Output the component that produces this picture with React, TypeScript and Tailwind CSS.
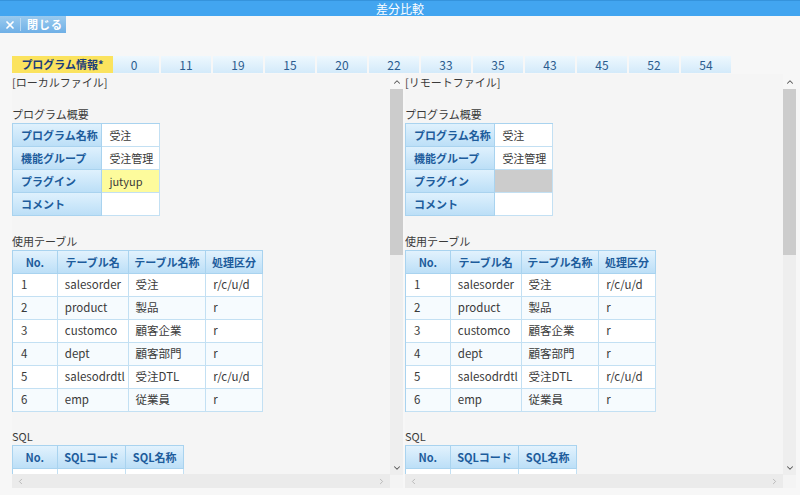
import React from 'react';
import { X, ChevronUp, ChevronDown, ChevronLeft, ChevronRight } from 'lucide-react';

const tabs = ['0', '11', '19', '15', '20', '22', '33', '35', '43', '45', '52', '54'];

const tableRows = [
  ['1', 'salesorder', '受注', 'r/c/u/d'],
  ['2', 'product', '製品', 'r'],
  ['3', 'customco', '顧客企業', 'r'],
  ['4', 'dept', '顧客部門', 'r'],
  ['5', 'salesodrdtl', '受注DTL', 'r/c/u/d'],
  ['6', 'emp', '従業員', 'r'],
];

const headCell =
  'h-[23px] flex items-center justify-center border-r border-b border-[#a9d3ef] bg-linear-to-b from-[#e2f2fd] to-[#bcdff7] font-bold text-[#1d5c9c]';
const dataCell = 'h-[23px] flex items-center pl-[7px] border-r border-b border-[#c3e0f3]';

function VScroll() {
  return (
    <div className="w-[13px] flex flex-col bg-[#eeeeee]">
      <div className="h-[15px] flex items-center justify-center bg-[#f7f7f7]">
        <ChevronUp size={10} strokeWidth={2.5} className="text-[#555]" />
      </div>
      <div className="h-[166px] bg-[#cccccc]" />
      <div className="flex-1" />
      <div className="h-[15px] flex items-center justify-center">
        <ChevronDown size={10} strokeWidth={2.5} className="text-[#555]" />
      </div>
      <div className="h-[13px] bg-[#f4f4f4]" />
    </div>
  );
}

function HScroll() {
  return (
    <div className="h-[14px] flex items-center justify-between bg-[#ebebeb] px-[4px]">
      <ChevronLeft size={9} strokeWidth={2} className="text-[#aaa]" />
      <ChevronRight size={9} strokeWidth={2} className="text-[#aaa]" />
    </div>
  );
}

function Panel({ title, remote }: { title: string; remote?: boolean }) {
  return (
    <div className="flex h-[414px]">
      <div className="w-[378px] flex flex-col">
        <div className="flex-1 overflow-hidden bg-[#f5f5f5] text-[11px] text-[#3a3a3a]">
          <div className="h-[17px] leading-[17px]">{title}</div>

          {/* プログラム概要 */}
          <div className="mt-[15px] h-[17px] leading-[17px]">プログラム概要</div>
          <div className="w-[148px] border-t border-l border-[#a9d3ef]">
            {[
              ['プログラム名称', '受注'],
              ['機能グループ', '受注管理'],
              ['プラグイン', remote ? '' : 'jutyup'],
              ['コメント', ''],
            ].map(([k, v], i) => (
              <div key={k} className="flex">
                <div className="w-[90px] h-[23px] flex items-center pl-[8px] border-r border-b border-[#a9d3ef] bg-linear-to-b from-[#dff1fd] to-[#bcdff7] font-bold text-[#1d5c9c]">
                  {k}
                </div>
                <div
                  className={
                    'w-[58px] ' +
                    dataCell +
                    (i === 2 ? (remote ? ' bg-[#cccccc]' : ' bg-[#fdfb9c]') : ' bg-white')
                  }
                >
                  {v}
                </div>
              </div>
            ))}
          </div>

          {/* 使用テーブル */}
          <div className="mt-[17px] h-[17px] leading-[17px]">使用テーブル</div>
          <div className="w-[251px] border-t border-l border-[#a9d3ef] text-[11.5px]">
            <div className="flex text-[11px]">
              <div className={'w-[45px] ' + headCell}>No.</div>
              <div className={'w-[71px] ' + headCell}>テーブル名</div>
              <div className={'w-[78px] ' + headCell}>テーブル名称</div>
              <div className={'w-[57px] ' + headCell}>処理区分</div>
            </div>
            {tableRows.map((r, i) => (
              <div key={r[0]} className={'flex ' + (i % 2 ? 'bg-[#f6fbfe]' : 'bg-white')}>
                <div className={'w-[45px] pl-[8px] ' + dataCell}>{r[0]}</div>
                <div className={'w-[71px] ' + dataCell}>{r[1]}</div>
                <div className={'w-[78px] ' + dataCell}>{r[2]}</div>
                <div className={'w-[57px] ' + dataCell}>{r[3]}</div>
              </div>
            ))}
          </div>

          {/* SQL */}
          <div className="mt-[16px] h-[17px] leading-[17px]">SQL</div>
          <div className="w-[172px] border-t border-l border-[#a9d3ef]">
            <div className="flex">
              <div className={'w-[45px] ' + headCell}>No.</div>
              <div className={'w-[69px] ' + headCell}>SQLコード</div>
              <div className={'w-[58px] ' + headCell}>SQL名称</div>
            </div>
            <div className="flex bg-white">
              <div className={'w-[45px] ' + dataCell} />
              <div className={'w-[69px] ' + dataCell} />
              <div className={'w-[58px] ' + dataCell} />
            </div>
          </div>
        </div>
        <HScroll />
      </div>
      <VScroll />
    </div>
  );
}

export default function App() {
  return (
    <div className="w-[800px] h-[495px] overflow-hidden bg-[#f7f7f7] flex flex-col font-['Noto_Sans_CJK_JP','Noto_Sans',sans-serif]">
      {/* title bar */}
      <div className="h-[16px] flex items-center justify-center bg-[#42a5f0] border-t border-[#3593dc] text-white text-[12px] leading-none">
        差分比較
      </div>

      {/* toolbar */}
      <div className="h-[17px] flex">
        <div className="w-[66px] h-full flex items-center bg-linear-to-b from-[#9acaef] to-[#6fb0e6] text-white text-[11px] font-bold">
          <div className="w-[20px] flex justify-center">
            <X size={12} strokeWidth={3.5} />
          </div>
          <div className="w-[1px] h-[13px] bg-[#b6d8f3]" />
          <div className="pl-[6px] tracking-[1px]">閉じる</div>
        </div>
      </div>

      {/* tabs */}
      <div className="mt-[23px] h-[17px] flex pl-[12px] text-[12px]">
        <div className="relative z-10 w-[101px] h-full flex items-center justify-center bg-[#fbe35e] text-[11px] font-bold text-[#1c3d7a]">
          プログラム情報*
        </div>
        <div className="-ml-[4px] flex">
          {tabs.map((t) => (
            <div
              key={t}
              className="w-[52px] h-full flex items-center justify-center border-r-2 border-[#f7f7f7] bg-linear-to-b from-[#eef8fe] to-[#d3eafa] text-[#2b5c8e]"
            >
              {t}
            </div>
          ))}
        </div>
      </div>

      {/* panels */}
      <div className="mt-[1px] flex pl-[12px] gap-[2px]">
        <Panel title="[ローカルファイル]" />
        <Panel title="[リモートファイル]" remote />
      </div>
    </div>
  );
}
